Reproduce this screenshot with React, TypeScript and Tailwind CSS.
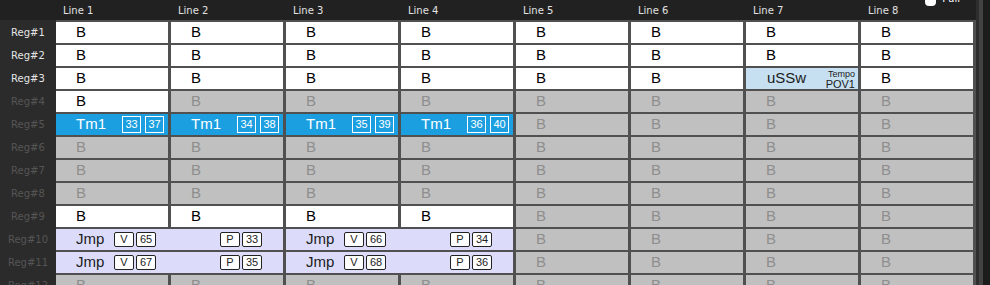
import React from "react";

type Cell =
  | { k: "w" }
  | { k: "g" }
  | { k: "tm"; a: string; b: string }
  | { k: "ussw" }
  | { k: "jmp"; v: string; vn: string; p: string; pn: string };

const W: Cell = { k: "w" };
const G: Cell = { k: "g" };

const rows: Cell[][] = [
  [W, W, W, W, W, W, W, W],
  [W, W, W, W, W, W, W, W],
  [W, W, W, W, W, W, { k: "ussw" }, W],
  [W, G, G, G, G, G, G, G],
  [
    { k: "tm", a: "33", b: "37" },
    { k: "tm", a: "34", b: "38" },
    { k: "tm", a: "35", b: "39" },
    { k: "tm", a: "36", b: "40" },
    G, G, G, G,
  ],
  [G, G, G, G, G, G, G, G],
  [G, G, G, G, G, G, G, G],
  [G, G, G, G, G, G, G, G],
  [W, W, W, W, G, G, G, G],
  [
    { k: "jmp", v: "V", vn: "65", p: "P", pn: "33" },
    { k: "jmp", v: "V", vn: "66", p: "P", pn: "34" },
    G, G, G, G,
  ],
  [
    { k: "jmp", v: "V", vn: "67", p: "P", pn: "35" },
    { k: "jmp", v: "V", vn: "68", p: "P", pn: "36" },
    G, G, G, G,
  ],
  [G, G, G, G, G, G, G, G],
];

const cellFont = { fontFamily: '"Liberation Sans", Arial, sans-serif' };
const uiFont = { fontFamily: '"DejaVu Sans", Verdana, sans-serif' };

function Box({ t, dark }: { t: string; dark?: boolean }) {
  return dark ? (
    <span className="flex h-[15px] w-[20px] items-center justify-center rounded-[2px] border border-[#222] bg-white text-[11px] leading-none text-[#222]">
      {t}
    </span>
  ) : (
    <span className="flex h-[17px] w-[19px] items-center justify-center border border-white text-[11px] leading-none text-white">
      {t}
    </span>
  );
}

function CellView({ c }: { c: Cell }) {
  if (c.k === "w")
    return (
      <div className="flex h-[21px] items-center bg-white pl-[20px] text-[15px] text-black">B</div>
    );
  if (c.k === "g")
    return (
      <div className="flex h-[21px] items-center bg-[#c0c0c0] pl-[20px] text-[15px] text-[#8e8e8e]">B</div>
    );
  if (c.k === "tm")
    return (
      <div className="flex h-[21px] items-center bg-[#1c9fe1] pl-[20px] pr-[4px] text-[15px] text-white">
        <span>Tm1</span>
        <span className="ml-auto flex gap-[4px]">
          <Box t={c.a} />
          <Box t={c.b} />
        </span>
      </div>
    );
  if (c.k === "ussw")
    return (
      <div className="flex h-[21px] items-center bg-[#c6e0f2] pl-[21px] pr-[3px] text-[15px] text-[#1a1a1a]">
        <span>uSSw</span>
        <span className="ml-auto flex flex-col items-end pt-[1px]">
          <span className="text-[9px] leading-[9px]">Tempo</span>
          <span className="text-[11px] leading-[10px]">POV1</span>
        </span>
      </div>
    );
  return (
    <div className="col-span-2 flex h-[21px] items-center bg-[#dcdcfa] pl-[20px] pr-[21px] text-[15px] text-[#1a1a1a]">
      <span className="w-[38px]">Jmp</span>
      <span className="flex gap-[2px]">
        <Box t={c.v} dark />
        <Box t={c.vn} dark />
      </span>
      <span className="ml-auto flex gap-[2px]">
        <Box t={c.p} dark />
        <Box t={c.pn} dark />
      </span>
    </div>
  );
}

export default function App() {
  return (
    <div className="flex h-[285px] w-[990px] overflow-hidden bg-[#2b2b2b]" style={cellFont}>
      <div className="flex w-[976px] flex-col">
        <div className="flex h-[20px] shrink-0 items-center bg-[#212121] text-[10px] text-[#e2e2e2]" style={uiFont}>
          <div className="w-[56px] shrink-0" />
          {Array.from({ length: 8 }, (_, i) => (
            <div key={i} className="flex h-full w-[115px] shrink-0 items-center pl-[7px] pt-[1px]">
              Line {i + 1}
              {i === 7 && (
                <span className="ml-auto mr-[16px] -mt-[24px] flex items-end gap-[6px] text-[10px] text-white">
                  <span className="h-[9px] w-[11px] rounded-sm bg-white" />
                  <span>Pull</span>
                </span>
              )}
            </div>
          ))}
        </div>
        <div className="flex flex-1">
          <div className="flex w-[56px] shrink-0 flex-col gap-[2px] bg-[#2b2b2b] pt-[2px] text-[10px]" style={uiFont}>
            {rows.map((_, i) => (
              <div
                key={i}
                className={`flex h-[21px] shrink-0 items-center justify-center ${i < 3 ? "text-[#e4e4e4]" : "text-[#555555]"}`}
              >
                Reg#{i + 1}
              </div>
            ))}
          </div>
          <div className="grid h-fit grid-cols-[repeat(8,112px)] gap-x-[3px] gap-y-[2px] bg-[#505050] pr-[3px] pt-[2px] pb-[2px]">
            {rows.map((r, i) => r.map((c, j) => <CellView key={`${i}-${j}`} c={c} />))}
          </div>
        </div>
      </div>
      <div className="w-[3px] bg-[#2e2e2e]" />
      <div className="w-[4px] bg-[#424242]" />
      <div className="w-[7px] bg-[#1c1c1c]" />
    </div>
  );
}
